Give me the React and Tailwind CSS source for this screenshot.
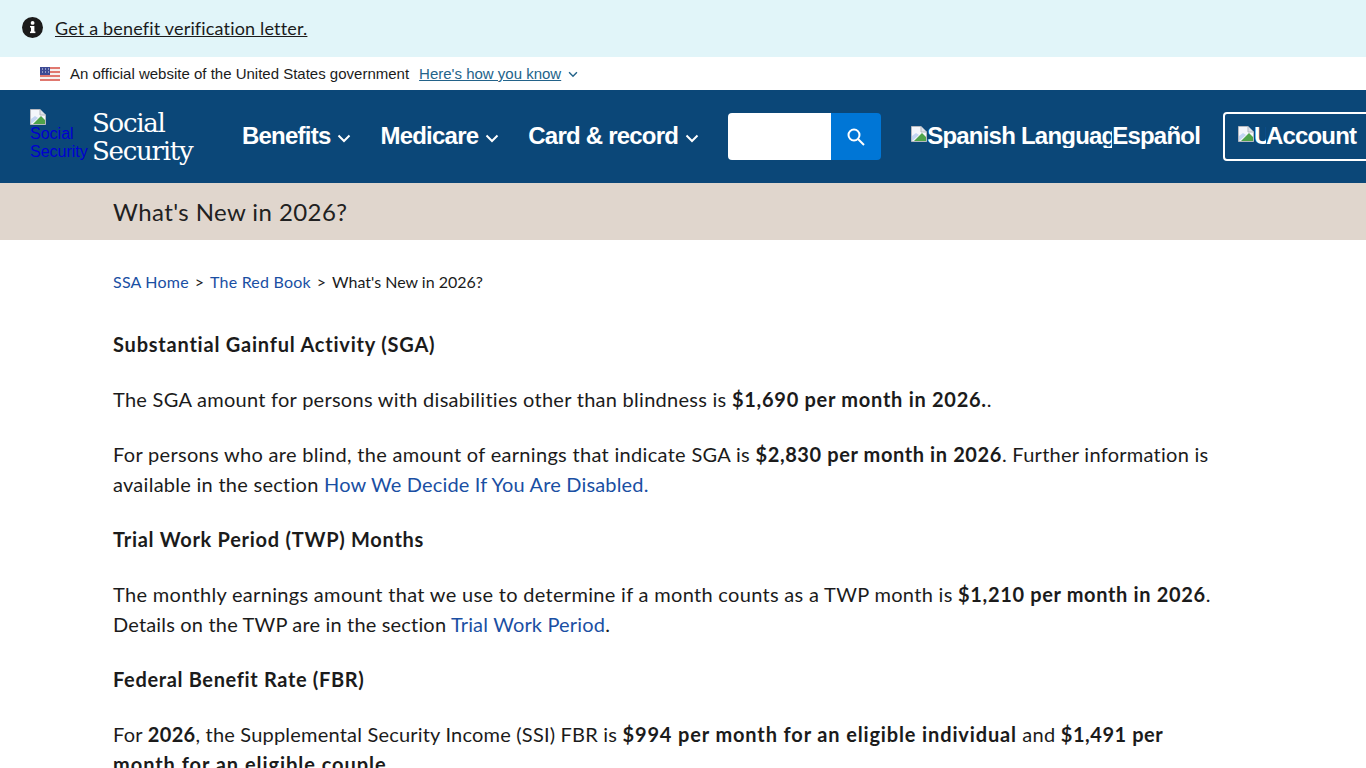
import React from "react";

const Broken = ({ cls = "" }) => (
  <svg width="16" height="16" viewBox="0 0 16 16" className={"shrink-0 " + cls}>
    <path d="M0.5 0.5H10L15.5 6V15.5H0.5Z" fill="#f4f6fb" stroke="#b5b8bf" />
    <path d="M10 0.5V6H15.5" fill="#dfe3ea" stroke="#b5b8bf" />
    <path d="M1 15V10L5 7L8 9L1 15Z" fill="#c3d5f2" />
    <path d="M3 15L11 7L15 11V15Z" fill="#4fa34a" />
  </svg>
);

const Chevron = ({ cls }) => (
  <svg viewBox="0 0 14 9" className={cls} fill="none" stroke="currentColor" strokeWidth="2">
    <path d="M1.5 1.5L7 7L12.5 1.5" />
  </svg>
);

const NavItem = ({ label }) => (
  <div className="flex items-center gap-[7px] text-[24px] leading-none font-bold text-white tracking-[-0.78px]">
    <span>{label}</span>
    <Chevron cls="w-[14px] h-[9px] mt-[5px]" />
  </div>
);

const P = ({ children }) => <p className="mb-[25px]">{children}</p>;
const B = ({ children, cls = "tracking-[0.72px]" }) => <b className={cls}>{children}</b>;
const A = ({ children, cls = "" }) => <a className={"text-[#1a4fa3] " + cls}>{children}</a>;

export default function App() {
  return (
    <div className="h-[768px] overflow-hidden bg-white text-[#1b1b1b] font-['Lato',sans-serif]">
      <div className="h-[57px] bg-[#e1f5f9] flex items-center pl-[22px] gap-[12px] pb-[2px]">
        <svg width="21" height="21" viewBox="0 0 21 21">
          <circle cx="10.5" cy="10.5" r="10.5" fill="#1b1b1b" />
          <rect x="9" y="9" width="3.4" height="7" fill="#fff" />
          <rect x="8" y="14.5" width="5.4" height="1.6" fill="#fff" />
          <rect x="8" y="9" width="3" height="1.5" fill="#fff" />
          <circle cx="10.6" cy="5.9" r="1.9" fill="#fff" />
        </svg>
        <a className="text-[18px] underline tracking-[0.17px] mt-[2px]">Get a benefit verification letter.</a>
      </div>

      <div className="h-[33px] bg-white flex items-center pl-[40px] font-['Liberation_Sans',sans-serif] text-[15px] pt-[1px]">
        <svg width="20" height="14" viewBox="0 0 20 14" className="mr-[10px]">
          <rect width="20" height="14" fill="#f6f0ef" />
          <rect y="0" width="20" height="2" fill="#e0786f" />
          <rect y="4" width="20" height="2" fill="#e0786f" />
          <rect y="8" width="20" height="2" fill="#e0786f" />
          <rect y="12" width="20" height="2" fill="#e0786f" />
          <rect width="10" height="8" fill="#3d4a94" />
          <path d="M2 2h1M5 2h1M8 2h1M2 5h1M5 5h1M8 5h1" stroke="#e8e8f4" />
        </svg>
        <span>An official website of the United States government</span>
        <a className="ml-[10px] text-[#23638a] underline">Here's how you know</a>
        <Chevron cls="w-[10px] h-[7px] ml-[7px] text-[#23638a]" />
      </div>

      <div className="h-[93px] bg-[#0b4778] flex items-center font-['Liberation_Sans',sans-serif] overflow-hidden whitespace-nowrap">
        <div className="w-[63px] h-[54px] ml-[30px] -mt-[1px] overflow-hidden text-[16px] leading-[18px] text-[#0000d0] shrink-0">
          <Broken />
          <div>Social</div>
          <div>Security</div>
        </div>
        <div className="w-[149px] shrink-0 -ml-[1px] mr-[1px] font-['DejaVu_Serif',serif] text-white text-[26px] leading-[28px] tracking-[-1.25px]">
          <div>Social</div>
          <div>Security</div>
        </div>
        <div className="flex items-center gap-[29px] shrink-0 -mt-[2px]">
          <NavItem label="Benefits" />
          <NavItem label="Medicare" />
          <NavItem label="Card & record" />
        </div>
        <div className="flex ml-[29px] shrink-0">
          <div className="w-[103px] h-[47px] bg-white rounded-l-[4px]" />
          <div className="w-[50px] h-[47px] bg-[#0076d6] rounded-r-[4px] flex items-center justify-center">
            <svg width="20" height="20" viewBox="0 0 20 20" fill="none" stroke="#fff" strokeWidth="2">
              <circle cx="8" cy="8" r="5.5" />
              <path d="M12 12L18 18" />
            </svg>
          </div>
        </div>
        <div className="ml-[30px] shrink-0 flex items-center text-[24px] leading-none font-bold text-white tracking-[-0.78px] -mt-[2px]">
          <div className="w-[201px] shrink-0 flex items-center overflow-hidden">
            <Broken cls="-mt-[3px]" />
            <span>Spanish Language</span>
          </div>
          <span>Español</span>
        </div>
        <div className="ml-[23px] shrink-0 w-[160px] h-[49px] border-2 border-white rounded-[4px] flex items-center pl-[13px] pb-[2px] text-[24px] leading-none font-bold text-white tracking-[-0.85px]">
          <div className="w-[28px] shrink-0 flex items-center overflow-hidden">
            <Broken cls="-mt-[3px]" />
            <span>User</span>
          </div>
          <span>Account</span>
        </div>
      </div>

      <div className="h-[57px] bg-[#e0d6cd] flex items-center pl-[113px] text-[24px] text-[#212121] tracking-[0.42px] pt-[1px]">
        What's New in 2026?
      </div>

      <div className="px-[113px] pt-[31px]">
        <div className="text-[16px] leading-[22px] mb-[36px] flex">
          <A cls="tracking-[0.2px]">SSA Home</A>
          <span className="mx-[6px]">&gt;</span>
          <A cls="tracking-[0.2px]">The Red Book</A>
          <span className="mx-[6px]">&gt;</span>
          <span>What's New in 2026?</span>
        </div>
        <div className="text-[20px] leading-[30px] w-[1112px] tracking-[0.27px]">
          <P><B cls="tracking-[0.78px]">Substantial Gainful Activity (SGA)</B></P>
          <P>The SGA amount for persons with disabilities other than blindness is <B>$1,690 per month in 2026.</B>.</P>
          <P><span className="tracking-[0.31px]">For persons who are blind, the amount of earnings that indicate SGA is </span><B cls="tracking-[0.6px]">$2,830 per month in 2026</B>. Further information is available in the section <A cls="tracking-[0.17px]">How We Decide If You Are Disabled.</A></P>
          <P><B>Trial Work Period (TWP) Months</B></P>
          <P><span className="tracking-[0.31px]">The monthly earnings amount that we use to determine if a month counts as a TWP month is </span><B cls="tracking-[0.65px]">$1,210 per month in 2026</B>. <span className="tracking-[0.17px]">Details on the TWP are in the section </span><A cls="tracking-[0.17px]">Trial Work Period</A>.</P>
          <P><B cls="tracking-[0.65px]">Federal Benefit Rate (FBR)</B></P>
          <P>For <B cls="tracking-[0.3px]">2026</B><span className="tracking-[0.2px]">, the Supplemental Security Income (SSI) FBR is </span><B cls="tracking-[0.86px]">$994 per month for an eligible individual</B> and <B cls="tracking-[0.55px]">$1,491 per</B> <B cls="tracking-[0.95px]">month for an eligible couple</B>.</P>
        </div>
      </div>
    </div>
  );
}
